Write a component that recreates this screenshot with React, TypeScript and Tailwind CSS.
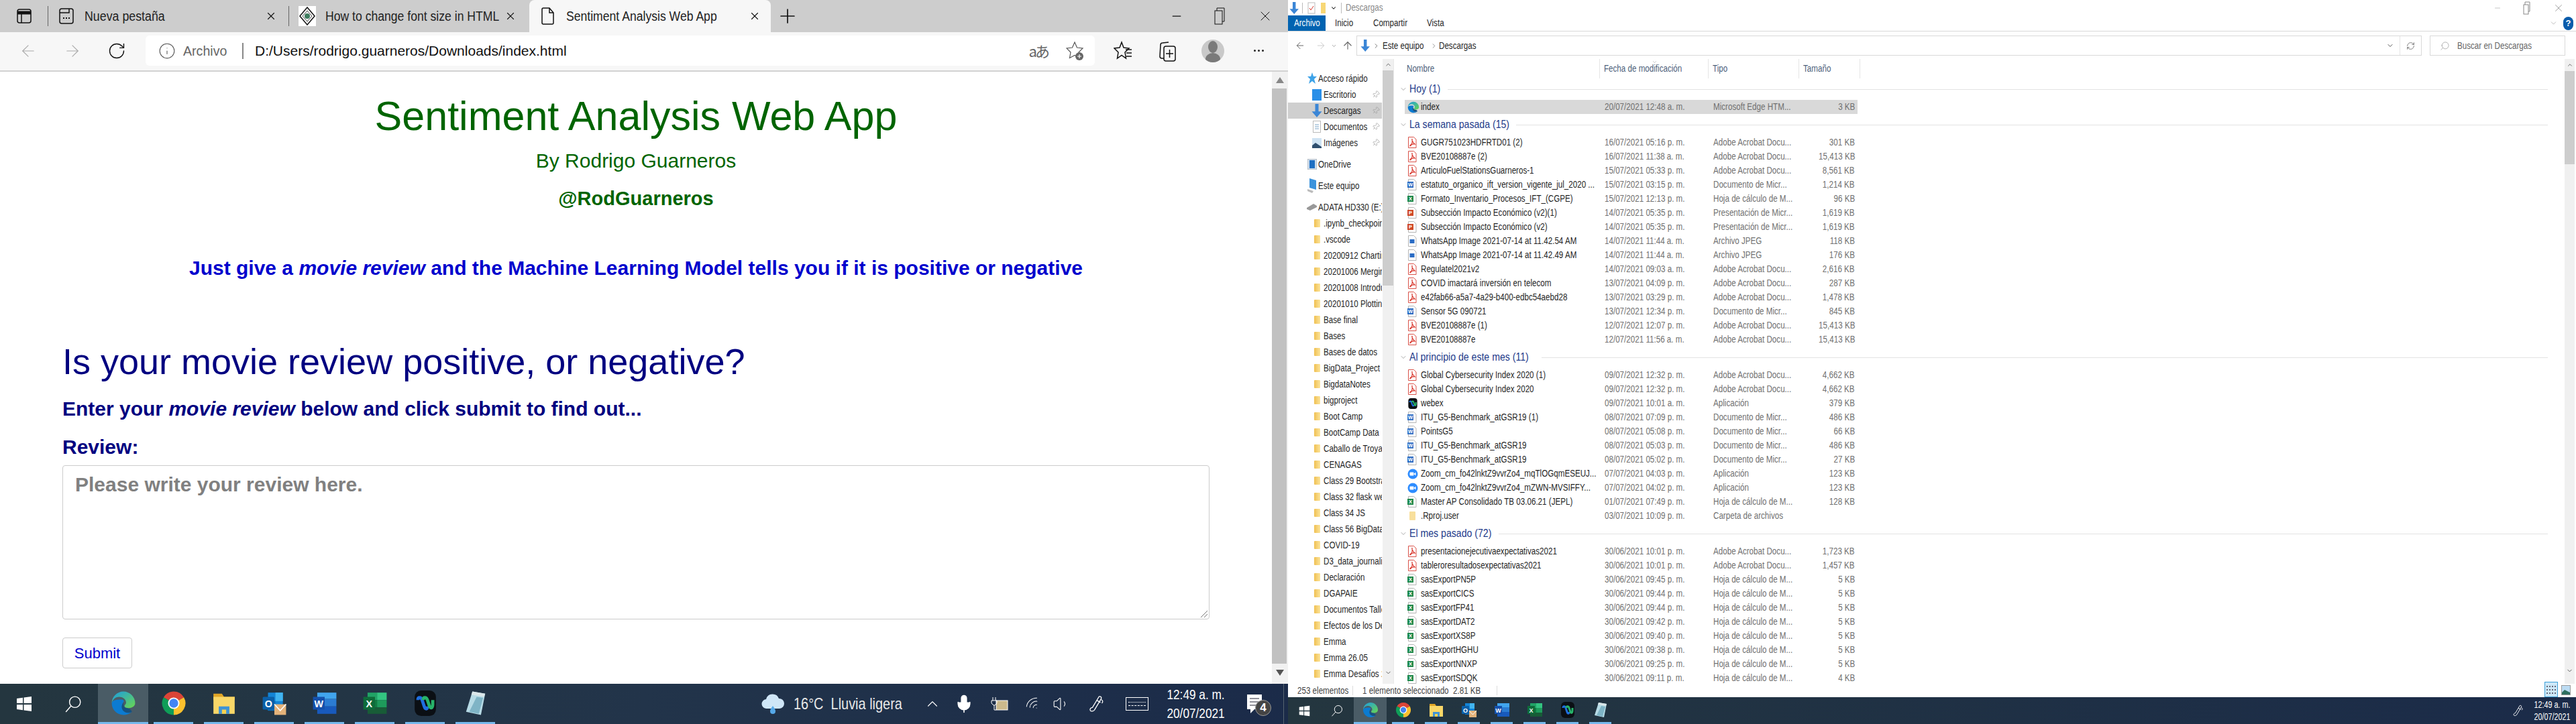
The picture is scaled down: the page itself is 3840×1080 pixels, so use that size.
import React from "react";
import { ArrowLeft, ArrowRight, RotateCw, Info, Plus, Minus, X, ChevronDown, ChevronUp, ChevronRight, Search, Pin, ArrowUp, Mic, Volume1, Wifi, RefreshCw } from "lucide-react";

type K = "pdf" | "word" | "wordp" | "xl" | "ppt" | "jpg" | "edge" | "webex" | "zoom" | "folder";
type Row = [K, string, string, string, string];

const S = ({ c = "", children }: { c?: string; children: React.ReactNode }) => (
  <span className={`inline-block whitespace-nowrap origin-left scale-x-[.83] ${c}`}>{children}</span>
);

const Edge = ({ s }: { s: number }) => (
  <svg width={s} height={s} viewBox="0 0 24 24" className="shrink-0">
    <defs>
      <linearGradient id="eg" x1="0" y1="0" x2="1" y2="1">
        <stop offset="0" stopColor="#1b9de2" />
        <stop offset="1" stopColor="#6ad64f" />
      </linearGradient>
    </defs>
    <path d="M12 1a11 11 0 0 1 11 11c0 3-3 4.5-6 4.5-2 0-4-.5-4-2 0-1 1.5-1.5 1.5-3C14.5 8 11 6 8 6 5 6 2 8 1 12 1 6 6 1 12 1z" fill="url(#eg)" />
    <path d="M1 12c0 6 5 11 11 11 3 0 6-1 8-3-2 1-5 1-7-.5-3-2-3-6-1-8.5 1-1.2 0-2.5-2-2.5C5 8.5 1.5 9 1 12z" fill="#0c7bd1" />
    <path d="M12 11.5c-2.500 3-2 6.500 1 8.500 2 1.300 5 1.300 7 0-.5-2-3-3.500-5-3.500-2 0-3-1-3-5z" fill="#17517f" />
  </svg>
);
const Chrome = ({ s }: { s: number }) => (
  <svg width={s} height={s} viewBox="0 0 24 24" className="shrink-0">
    <path d="M12 12L2.470 6.500A11 11 0 0 1 21.530 6.500Z" fill="#db4437" />
    <path d="M12 12L21.530 6.500A11 11 0 0 1 12 23Z" fill="#fbc02d" />
    <path d="M12 12L12 23A11 11 0 0 1 2.470 6.500Z" fill="#0f9d58" />
    <circle cx="12" cy="12" r="5.400" fill="#fff" />
    <circle cx="12" cy="12" r="4.200" fill="#4285f4" />
  </svg>
);
const FolderT = ({ s }: { s: number }) => (
  <svg width={s} height={s} viewBox="0 0 24 24" className="shrink-0">
    <path d="M2 3h8l2 3h10v3H2z" fill="#e0a526" />
    <rect x="2" y="6" width="20" height="16" fill="#f9d768" />
    <rect x="7" y="15" width="10" height="7" fill="#3f93d6" />
    <rect x="10" y="18" width="4" height="4" fill="#f7d24e" />
  </svg>
);
const Outlook = ({ s }: { s: number }) => (
  <svg width={s} height={s} viewBox="0 0 24 24" className="shrink-0">
    <rect x="6" y="2" width="14" height="17" fill="#1384d6" />
    <rect x="13" y="2" width="7" height="8" fill="#41b4f0" />
    <rect x="6" y="10" width="7" height="9" fill="#0b6cb8" />
    <rect x="1" y="6" width="11" height="12" rx="1" fill="#0a5fa8" />
    <text x="6.500" y="15.500" fontSize="9" fontWeight="700" fill="#fff" textAnchor="middle" fontFamily="Liberation Sans">O</text>
    <rect x="12" y="13" width="11" height="10" fill="#e3b27a" />
    <path d="M12 13l5.500 6 5.500-6" fill="none" stroke="#fff" strokeWidth="1" />
  </svg>
);
const Word = ({ s }: { s: number }) => (
  <svg width={s} height={s} viewBox="0 0 24 24" className="shrink-0">
    <rect x="5" y="2" width="18" height="6" fill="#41a5ee" />
    <rect x="5" y="8" width="18" height="7" fill="#2b7cd3" />
    <rect x="5" y="15" width="18" height="7" fill="#185abd" />
    <rect x="1" y="6" width="11" height="12" fill="#1550ab" />
    <text x="6.500" y="15.500" fontSize="9" fontWeight="700" fill="#fff" textAnchor="middle" fontFamily="Liberation Sans">W</text>
  </svg>
);
const Excel = ({ s }: { s: number }) => (
  <svg width={s} height={s} viewBox="0 0 24 24" className="shrink-0">
    <rect x="5" y="2" width="9" height="7" fill="#21a366" />
    <rect x="14" y="2" width="9" height="7" fill="#33c481" />
    <rect x="5" y="9" width="9" height="7" fill="#107c41" />
    <rect x="14" y="9" width="9" height="7" fill="#1e9b5b" />
    <rect x="5" y="16" width="18" height="6" fill="#185c37" />
    <rect x="1" y="6" width="11" height="12" fill="#0e6b3a" />
    <text x="6.500" y="15.500" fontSize="9" fontWeight="700" fill="#fff" textAnchor="middle" fontFamily="Liberation Sans">X</text>
  </svg>
);
const Webex = ({ s }: { s: number }) => (
  <svg width={s} height={s} viewBox="0 0 24 24" className="shrink-0">
    <rect x="2" y="0" width="20" height="24" rx="6" fill="#0b0f14" />
    <path d="M5 9c0-3 3-3 4 0l2 6c1 3 3 3 3 0" fill="none" stroke="#1f6fe0" strokeWidth="3" />
    <path d="M10 9c0-3 3-3 4 0l2 6c1 2 3 2 3-2V9" fill="none" stroke="#27b36a" strokeWidth="3" />
  </svg>
);
const Notepad = ({ s }: { s: number }) => (
  <svg width={s} height={s} viewBox="0 0 24 24" className="shrink-0">
    <path d="M9 1l12 2-4 20-14-3z" fill="#b7dbe6" />
    <path d="M9 1l12 2-1 3-12-2z" fill="#dbe7ea" />
    <path d="M13 6l6 1-4 15-9-2z" fill="#7fb4c6" />
  </svg>
);

const FileIcon = ({ k }: { k: K }) => {
  if (k === "edge") return <Edge s={18} />;
  if (k === "webex") return <Webex s={16} />;
  if (k === "zoom")
    return (
      <svg width="16" height="16" viewBox="0 0 16 16" className="shrink-0">
        <circle cx="8" cy="8" r="7.500" fill="#2d8cff" />
        <rect x="3.500" y="5.500" width="6" height="5" rx="1" fill="#fff" />
        <path d="M10 7.500l2.500-2v5l-2.500-2z" fill="#fff" />
      </svg>
    );
  if (k === "folder") return <span className="w-[9px] h-[13px] rounded-[1px] bg-[#f8df9c] shrink-0 ml-[3px]" />;
  const color = { pdf: "#d9382e", word: "#2b6cc4", wordp: "#3a76c9", xl: "#1f8a4c", ppt: "#d04a28", jpg: "#2b6cc4" }[k];
  const label = { pdf: "", word: "W", wordp: "W", xl: "X", ppt: "P", jpg: "" }[k];
  return (
    <svg width="14" height="17" viewBox="0 0 14 17" className="shrink-0">
      <path d="M1.500.5h8l3.500 3.500v12.500h-11.500z" fill="#fff" stroke={k === "pdf" ? "#d9534a" : "#b5b5b5"} />
      {k === "pdf" ? (
        <path d="M7 3c-1 3 3 7 4 8-2-.5-6 0-7 2-1 1.500 1 1 2-1 1-2 1.500-6 1-9z" fill="none" stroke="#d9382e" strokeWidth="1.200" />
      ) : k === "jpg" ? (
        <rect x="3.500" y="6" width="7" height="6" fill={color} />
      ) : (
        <>
          <rect x="0" y="4" width="9" height="9" fill={color} />
          <text x="4.500" y="11.200" fontSize="7.500" fontWeight="700" fill="#fff" textAnchor="middle" fontFamily="Liberation Sans">{label}</text>
        </>
      )}
    </svg>
  );
};

const g1: Row[] = [
  ["pdf", "GUGR751023HDFRTD01 (2)", "16/07/2021 05:16 p. m.", "Adobe Acrobat Docu...", "301 KB"],
  ["pdf", "BVE20108887e (2)", "16/07/2021 11:38 a. m.", "Adobe Acrobat Docu...", "15,413 KB"],
  ["pdf", "ArticuloFuelStationsGuarneros-1", "15/07/2021 05:33 p. m.", "Adobe Acrobat Docu...", "8,561 KB"],
  ["word", "estatuto_organico_ift_version_vigente_jul_2020 ...", "15/07/2021 03:15 p. m.", "Documento de Micr...", "1,214 KB"],
  ["xl", "Formato_Inventario_Procesos_IFT_(CGPE)", "15/07/2021 12:13 p. m.", "Hoja de cálculo de M...", "96 KB"],
  ["ppt", "Subsección Impacto Económico (v2)(1)", "14/07/2021 05:35 p. m.", "Presentación de Micr...", "1,619 KB"],
  ["ppt", "Subsección Impacto Económico (v2)", "14/07/2021 05:35 p. m.", "Presentación de Micr...", "1,619 KB"],
  ["jpg", "WhatsApp Image 2021-07-14 at 11.42.54 AM", "14/07/2021 11:44 a. m.", "Archivo JPEG", "118 KB"],
  ["jpg", "WhatsApp Image 2021-07-14 at 11.42.49 AM", "14/07/2021 11:44 a. m.", "Archivo JPEG", "176 KB"],
  ["pdf", "Regulatel2021v2", "14/07/2021 09:03 a. m.", "Adobe Acrobat Docu...", "2,616 KB"],
  ["pdf", "COVID imactará inversión en telecom", "13/07/2021 04:09 p. m.", "Adobe Acrobat Docu...", "287 KB"],
  ["pdf", "e42fab66-a5a7-4a29-b400-edbc54aebd28", "13/07/2021 03:29 p. m.", "Adobe Acrobat Docu...", "1,478 KB"],
  ["word", "Sensor 5G 090721", "13/07/2021 12:34 p. m.", "Documento de Micr...", "845 KB"],
  ["pdf", "BVE20108887e (1)", "12/07/2021 12:07 p. m.", "Adobe Acrobat Docu...", "15,413 KB"],
  ["pdf", "BVE20108887e", "12/07/2021 11:56 a. m.", "Adobe Acrobat Docu...", "15,413 KB"],
];
const g2: Row[] = [
  ["pdf", "Global Cybersecurity Index 2020 (1)", "09/07/2021 12:32 p. m.", "Adobe Acrobat Docu...", "4,662 KB"],
  ["pdf", "Global Cybersecurity Index 2020", "09/07/2021 12:32 p. m.", "Adobe Acrobat Docu...", "4,662 KB"],
  ["webex", "webex", "09/07/2021 10:01 a. m.", "Aplicación", "379 KB"],
  ["wordp", "ITU_G5-Benchmark_atGSR19 (1)", "08/07/2021 07:09 p. m.", "Documento de Micr...", "486 KB"],
  ["wordp", "PointsG5", "08/07/2021 05:08 p. m.", "Documento de Micr...", "66 KB"],
  ["wordp", "ITU_G5-Benchmark_atGSR19", "08/07/2021 05:03 p. m.", "Documento de Micr...", "486 KB"],
  ["word", "ITU_G5-Benchmark_atGSR19", "08/07/2021 05:02 p. m.", "Documento de Micr...", "27 KB"],
  ["zoom", "Zoom_cm_fo42lnktZ9vvrZo4_mqTlOGqmESEUJ...", "07/07/2021 04:03 p. m.", "Aplicación", "123 KB"],
  ["zoom", "Zoom_cm_fo42lnktZ9vvrZo4_mZWN-MVSIFFY...", "07/07/2021 04:02 p. m.", "Aplicación", "123 KB"],
  ["xl", "Master AP Consolidado TB 03.06.21 (JEPL)", "01/07/2021 07:49 p. m.", "Hoja de cálculo de M...", "128 KB"],
  ["folder", ".Rproj.user", "03/07/2021 10:09 p. m.", "Carpeta de archivos", ""],
];
const x = "Hoja de cálculo de M...";
const g3: Row[] = [
  ["pdf", "presentacionejecutivaexpectativas2021", "30/06/2021 10:01 p. m.", "Adobe Acrobat Docu...", "1,723 KB"],
  ["pdf", "tableroresultadosexpectativas2021", "30/06/2021 10:01 p. m.", "Adobe Acrobat Docu...", "1,457 KB"],
  ["xl", "sasExportPN5P", "30/06/2021 09:45 p. m.", x, "5 KB"],
  ["xl", "sasExportCICS", "30/06/2021 09:44 p. m.", x, "5 KB"],
  ["xl", "sasExportFP41", "30/06/2021 09:44 p. m.", x, "5 KB"],
  ["xl", "sasExportDAT2", "30/06/2021 09:42 p. m.", x, "5 KB"],
  ["xl", "sasExportXS8P", "30/06/2021 09:40 p. m.", x, "5 KB"],
  ["xl", "sasExportHGHU", "30/06/2021 09:38 p. m.", x, "5 KB"],
  ["xl", "sasExportNNXP", "30/06/2021 09:25 p. m.", x, "5 KB"],
  ["xl", "sasExportSDQK", "30/06/2021 09:11 p. m.", x, "4 KB"],
];

const navFolders = [".ipynb_checkpoints", ".vscode", "20200912 Charting", "20201006 Merging", "20201008 Introduction", "20201010 Plotting", "Base final", "Bases", "Bases de datos", "BigData_Project", "BigdataNotes", "bigproject", "Boot Camp", "BootCamp Data", "Caballo de Troya", "CENAGAS", "Class 29 Bootstrap", "Class 32 flask web", "Class 34 JS", "Class 56 BigData", "COVID-19", "D3_data_journalism", "Declaración", "DGAPAIE", "Documentos Taller", "Efectos de los Desastres", "Emma", "Emma 26.05", "Emma Desafíos 2"];

const FileRow = ({ r, sel }: { r: Row; sel?: boolean }) => (
  <div className={`grid grid-cols-[298px_162px_133px_82px] items-center h-[21px] w-[675px] ml-4 text-[14px] text-[#707070] ${sel ? "bg-[#d9d9d9]" : ""}`}>
    <div className="flex items-center overflow-hidden">
      <span className="w-6 flex pl-1 shrink-0"><FileIcon k={r[0]} /></span>
      <S c="text-[#1f1f1f]">{r[1]}</S>
    </div>
    <S>{r[2]}</S>
    <S>{r[3]}</S>
    <div className="flex justify-end pr-1"><span className="inline-block whitespace-nowrap origin-right scale-x-[.83]">{r[4]}</span></div>
  </div>
);

const Group = ({ t, w }: { t: string; w: string }) => (
  <div className="flex items-center h-8 pl-[8px] pr-[25px]">
    <ChevronDown size={12} strokeWidth={1} className="text-[#555] shrink-0" />
    <div className={`ml-[3px] shrink-0 ${w}`}><S c="text-[17px] text-[#1d3a8a]">{t}</S></div>
    <div className="flex-1 h-px bg-[#e3e3e3]" />
  </div>
);

const NavItem = ({ icon, text, pin, sel, l1 }: { icon: React.ReactNode; text: string; pin?: boolean; sel?: boolean; l1?: boolean }) => (
  <div className={`flex items-center h-6 shrink-0 relative overflow-hidden text-[14px] text-[#1f1f1f] ${sel ? "bg-[#cfcfcf]" : ""} ${l1 ? "pl-[26px]" : "pl-[33px]"}`}>
    <span className={`flex justify-center shrink-0 ${l1 ? "w-[19px]" : "w-5"}`}>{icon}</span>
    <S>{text}</S>
    {pin && <Pin size={12} strokeWidth={1.500} className="absolute right-[3px] top-[6px] text-[#a0a0a0] rotate-45 bg-transparent" />}
  </div>
);

const NavFolder = () => <span className="w-[9px] h-[12px] rounded-[1px] bg-linear-to-r from-[#f0c050] to-[#fbe49a]" />;
const DownArrow = ({ s = 16 }: { s?: number }) => (
  <svg width={s * 0.8} height={s} viewBox="0 0 12 16"><path d="M4 0h4v9h4l-6 7-6-7h4z" fill="#3b86d6" /></svg>
);

const Slot = ({ w, bar, hi, children }: { w: string; bar?: boolean; hi?: boolean; children: React.ReactNode }) => (
  <div className={`flex flex-col h-full shrink-0 ${w} ${hi ? "bg-[#4a5c66]" : ""}`}>
    <div className="flex-1 flex items-center justify-center">{children}</div>
    <div className={`h-[3px] ${bar ? "bg-[#76b9ed]" : ""} ${hi ? "" : "mx-2"}`} />
  </div>
);

const Win = ({ s }: { s: number }) => (
  <svg width={s} height={s} viewBox="0 0 24 24" className="shrink-0">
    <path d="M1 4l9-1.300V11H1zM11.500 2.500L23 1v10H11.500zM1 13h9v8.300L1 20zM11.500 13H23v10l-11.500-1.600z" fill="#fff" />
  </svg>
);
const Mag = ({ s }: { s: number }) => (
  <svg width={s} height={s} viewBox="0 0 24 24" fill="none" stroke="#fff" strokeWidth="1.300" className="shrink-0">
    <circle cx="14.500" cy="9.500" r="7.500" /><path d="M9 15l-7 8" />
  </svg>
);

const Pen = ({ s }: { s: number }) => (
  <svg width={s} height={s} viewBox="0 0 24 24" fill="none" stroke="#fff" strokeWidth="1.200" className="shrink-0">
    <path d="M15 2c2-1 4 1 3 3L9 20c-1 2-5 3-6 1s1-4 3-4l9-15z" /><path d="M12 7l5 3" /><path d="M18 6c2 1 3 3 1 5" />
  </svg>
);

const apps = (s: number) => [<Chrome s={s} />, <FolderT s={s} />, <Outlook s={s} />, <Word s={s} />, <Excel s={s} />, <Webex s={s} />, <Notepad s={s} />];

export default function App() {
  return (
    <div className="flex w-[3840px] h-[1080px] overflow-hidden bg-white font-['Liberation_Sans',Arial,sans-serif]">
      {/* LEFT MONITOR */}
      <div className="flex flex-col w-[1920px] shrink-0">
        {/* tab strip */}
        <div className="flex h-12 bg-[#cdcdcd] shrink-0 items-center text-[20px] text-[#222]">
          <div className="w-[71px] flex justify-center">
            <svg width="24" height="24" viewBox="0 0 24 24" fill="none" stroke="#111" strokeWidth="1.500">
              <rect x="2" y="2" width="20" height="20" rx="3" /><path d="M2 7h20" strokeWidth="5" /><path d="M8 7v15" />
            </svg>
          </div>
          <div className="w-px h-[30px] bg-[#666]" />
          <div className="flex items-center w-[358px] pl-4 shrink-0">
            <svg width="22" height="24" viewBox="0 0 22 24" fill="none" stroke="#111" strokeWidth="1.500">
              <rect x="1" y="1" width="20" height="22" rx="3" /><path d="M1 7h14V1" /><path d="M6 15h2M10 15h2M14 15h2" strokeWidth="2" />
            </svg>
            <span className="ml-4 w-[269px]"><S c="scale-x-[.89]">Nueva pestaña</S></span>
            <X size={18} strokeWidth={1.500} className="text-[#111]" />
          </div>
          <div className="w-px h-[30px] bg-[#666]" />
          <div className="flex items-center w-[358px] pl-[14px] shrink-0">
            <span className="w-[26px] h-[30px] bg-white flex items-center justify-center">
              <svg width="24" height="28" viewBox="0 0 24 28"><path d="M12 1l11 13-11 13L1 14z" fill="none" stroke="#111" strokeWidth="1.500" /><path d="M12 6l7 8-7 8-7-8z" fill="none" stroke="#444" /><circle cx="12" cy="14" r="4" fill="#3f7d5f" /></svg>
            </span>
            <span className="ml-[14px] w-[259px] overflow-hidden"><S c="scale-x-[.88]">How to change font size in HTML</S></span>
            <X size={18} strokeWidth={1.500} className="ml-[8px] text-[#111]" />
          </div>
          <div className="flex items-center w-[360px] h-full bg-[#f7f7f7] rounded-t-lg pl-[18px] shrink-0">
            <svg width="20" height="26" viewBox="0 0 20 26" fill="none" stroke="#111" strokeWidth="1.500">
              <path d="M3 1h9l6 7v15a2 2 0 0 1-2 2H3a2 2 0 0 1-2-2V3a2 2 0 0 1 2-2z" /><path d="M12 1v7h6" />
            </svg>
            <span className="ml-[17px] w-[272px]"><S c="scale-x-[.88]">Sentiment Analysis Web App</S></span>
            <X size={18} strokeWidth={1.500} className="text-[#111]" />
          </div>
          <Plus size={34} strokeWidth={1.200} className="ml-[8px] text-[#111]" />
          <div className="ml-auto flex items-center">
            <Minus size={20} strokeWidth={1.500} className="text-[#111] mr-[46px]" />
            <svg width="16" height="28" viewBox="0 0 16 28" fill="none" stroke="#111" className="mr-[48px]"><rect x="1" y="6" width="11" height="20" /><path d="M4 6V2h11v20h-3" /></svg>
            <X size={24} strokeWidth={1} className="text-[#111] mr-[22px]" />
          </div>
        </div>
        {/* toolbar */}
        <div className="flex items-center h-[59px] bg-[#f7f7f7] border-b-2 border-[#d2d2d2] shrink-0 pb-[2px]">
          <ArrowLeft size={28} strokeWidth={1} className="ml-7 text-[#aaa]" />
          <ArrowRight size={28} strokeWidth={1} className="ml-[38px] text-[#aaa]" />
          <RotateCw size={28} strokeWidth={1.200} className="ml-[38px] text-[#111]" />
          <div className="flex items-center ml-[29px] w-[1415px] h-[45px] bg-white rounded-md text-[20px]">
            <Info size={26} strokeWidth={1} className="ml-[19px] text-[#555]" />
            <span className="ml-[11px] w-[88px]"><S c="text-[#666] scale-x-[.98]">Archivo</S></span>
            <span className="w-[2px] h-[24px] bg-[#888]" />
            <span className="ml-[17px] w-[600px] text-[#111] text-[21px] whitespace-nowrap">D:/Users/rodrigo.guarneros/Downloads/index.html</span>
            <span className="ml-auto text-[#666] text-[22px] font-['Noto_Sans_CJK_JP',sans-serif] mr-[27px] tracking-[-3px]">aあ</span>
            <svg width="28" height="30" viewBox="0 0 28 30" fill="none" stroke="#555" strokeWidth="1.200" className="mr-[15px]">
              <path d="M13 2l3.500 8 8.500 1-6 6 1.500 8.500-7.500-4-7.500 4 1.500-8.500-6-6 8.500-1z" />
              <circle cx="20" cy="23" r="6" fill="#666" stroke="none" /><path d="M20 20v6M17 23h6" stroke="#fff" />
            </svg>
          </div>
          <svg width="28" height="30" viewBox="0 0 28 30" fill="none" stroke="#111" strokeWidth="1.500" className="ml-[28px]">
            <path d="M12 2l3 8 8 1-6 6 1.500 9-6.500-4.500-6.500 4.500 1.500-9-6-6 8-1z" /><path d="M18 13h9M19 18h8M19 23h8" />
          </svg>
          <svg width="26" height="32" viewBox="0 0 26 32" fill="none" stroke="#111" strokeWidth="1.500" className="ml-[39px]">
            <path d="M8 27l-3 0a3 3 0 0 1-3-3l1-17a3 3 0 0 1 3-3l9-1" /><rect x="8" y="9" width="17" height="22" rx="3" /><path d="M16.500 14v12M11 20h11" />
          </svg>
          <div className="ml-[38px] w-[34px] h-[34px] rounded-full bg-[#c9c9c9] overflow-hidden flex items-center justify-center">
            <svg width="30" height="34" viewBox="0 0 30 34"><ellipse cx="15" cy="11" rx="7" ry="9" fill="#7a7a7a" /><ellipse cx="15" cy="29" rx="11" ry="9" fill="#7a7a7a" /></svg>
          </div>
          <div className="ml-[44px] flex gap-[3px]">
            <span className="w-[3px] h-[3px] bg-[#222] rounded-full" /><span className="w-[3px] h-[3px] bg-[#222] rounded-full" /><span className="w-[3px] h-[3px] bg-[#222] rounded-full" />
          </div>
        </div>
        {/* page */}
        <div className="flex flex-1 min-h-0 bg-white">
          <div className="w-[1896px] shrink-0 overflow-hidden">
            <h1 className="mt-[32px] text-center text-[61px] leading-[69px] text-[#006400]">Sentiment Analysis Web App</h1>
            <h2 className="mt-[15px] text-center text-[30px] leading-[34px] text-[#006400]">By Rodrigo Guarneros</h2>
            <h3 className="mt-[23px] text-center text-[29px] leading-[32px] font-bold text-[#006400]">@RodGuarneros</h3>
            <p className="mt-[71px] text-center text-[30px] leading-[34px] font-bold text-[#0000cd]">Just give a <i>movie review</i> and the Machine Learning Model tells you if it is positive or negative</p>
            <div className="pl-[93px] w-[1803px]">
              <h2 className="mt-[92px] text-[54px] leading-[61px] text-[#000080]">Is your movie review positive, or negative?</h2>
              <p className="mt-[24px] text-[30px] leading-[32px] font-bold text-[#000080]">Enter your <i>movie review</i> below and click submit to find out...</p>
              <p className="mt-[25px] text-[30px] leading-[32px] font-bold text-[#000080]">Review:</p>
              <div className="relative mt-[11px] h-[230px] border border-[#ccc] rounded bg-white pl-[18px] pt-[11px]">
                <span className="text-[30px] leading-[34px] font-bold text-[#808080]">Please write your review here.</span>
                <svg width="12" height="12" viewBox="0 0 12 12" className="absolute right-[1px] bottom-[1px]" stroke="#777" fill="none"><path d="M11 1L1 11M11 6l-5 5" /></svg>
              </div>
              <button className="mt-[27px] w-[104px] h-[46px] border border-[#ccc] rounded text-[22px] text-[#0000cd] bg-white">Submit</button>
            </div>
          </div>
          <div className="w-[24px] shrink-0 flex flex-col bg-[#f1f1f1]">
            <div className="h-[25px] flex items-center justify-center"><span className="w-0 h-0 border-x-[6px] border-x-transparent border-b-[9px] border-b-[#888]" /></div>
            <div className="h-[858px] w-[22px] bg-[#c1c1c1]" />
            <div className="h-[26px] flex items-center justify-center"><span className="w-0 h-0 border-x-[6px] border-x-transparent border-t-[9px] border-t-[#555]" /></div>
          </div>
        </div>
        {/* taskbar left */}
        <div className="flex items-center h-[60px] shrink-0 bg-linear-to-r from-[#24363f] via-[#22344a] to-[#1b2b49] text-white">
          <div className="w-[72px] flex justify-center shrink-0"><Win s={24} /></div>
          <div className="w-[74px] flex justify-center shrink-0"><Mag s={26} /></div>
          <Slot w="w-[75px]" bar hi><Edge s={38} /></Slot>
          {apps(38).map((a, i) => <Slot key={i} w="w-[75px]" bar>{a}</Slot>)}
          <div className="ml-[389px] flex items-center h-full shrink-0">
            <svg width="35" height="34" viewBox="0 0 35 34" className="shrink-0">
              <path d="M8 24a7 7 0 0 1-1-14 10 10 0 0 1 19-1 7.500 7.500 0 0 1 1 15z" fill="#cfe6f7" />
              <path d="M17 20c3 4 4 6 4 8a4 4 0 0 1-8 0c0-2 1-4 4-8z" fill="#55a8e8" />
            </svg>
            <span className="ml-[13px] w-[190px] shrink-0"><S c="text-[24px] text-[#e8e8e8]">16°C&nbsp;&nbsp;Lluvia ligera</S></span>
            <span className="w-[34px] flex justify-center"><ChevronUp size={26} strokeWidth={1} /></span>
            <span className="w-[60px] flex justify-center"><Mic size={30} strokeWidth={1.300} fill="#fff" /></span>
            <span className="w-[46px] flex justify-center">
              <svg width="26" height="22" viewBox="0 0 26 22" fill="none" stroke="#fff"><rect x="8" y="6" width="17" height="14" fill="#cbb98c" /><path d="M3 1v5M7 1v5M1 6h8v4l-3 3H4l-3-3zM5 13v7h3" /></svg>
            </span>
            <span className="w-[54px] flex justify-center"><Wifi size={24} strokeWidth={1} className="rotate-[-40deg]" /></span>
            <span className="w-[30px] flex justify-center"><Volume1 size={26} strokeWidth={1} /></span>
            <span className="w-[76px] flex justify-center"><Pen s={26} /></span>
            <span className="w-[44px] flex justify-center">
              <span className="w-[34px] h-[20px] border border-white flex flex-col justify-center gap-[4px] px-[3px]">
                <span className="border-t border-dotted border-white" /><span className="border-t border-dashed border-white" />
              </span>
            </span>
            <div className="w-[132px] flex flex-col items-center text-[21px] leading-[28px] shrink-0">
              <span className="scale-x-[.82] whitespace-nowrap">12:49 a. m.</span>
              <span className="scale-x-[.82] whitespace-nowrap">20/07/2021</span>
            </div>
            <div className="relative w-[42px] flex justify-center">
              <svg width="24" height="30" viewBox="0 0 24 30"><path d="M1 1h22v22H12l-6 6v-6H1z" fill="#fff" /><path d="M5 7h14M5 12h14M5 17h10" stroke="#223" /></svg>
              <span className="absolute left-[22px] top-[9px] w-[24px] h-[24px] rounded-full bg-[#444] border border-[#999] flex items-center justify-center text-[17px] font-bold">4</span>
            </div>
            <div className="ml-[22px] w-px h-full bg-[#55646f]" />
          </div>
        </div>
      </div>

      {/* RIGHT MONITOR */}
      <div className="flex flex-col w-[1920px] shrink-0 text-[14px] text-[#1f1f1f]">
        {/* title */}
        <div className="flex items-center h-[23px] shrink-0 pl-[2px]">
          <DownArrow s={18} />
          <span className="ml-[5px] w-px h-[16px] bg-[#bbb]" />
          <svg width="12" height="18" viewBox="0 0 12 18" fill="none" className="ml-[7px]"><rect x="1" y="1" width="10" height="16" stroke="#bbb" /><path d="M3 9l2 3 4-6" stroke="#d9382e" /></svg>
          <span className="ml-[8px] w-[7px] h-[16px] bg-[#f8d775]" />
          <ChevronDown size={10} strokeWidth={2.500} className="ml-[7px] text-[#111]" />
          <span className="ml-[6px] w-px h-[16px] bg-[#bbb]" />
          <span className="ml-[6px]"><S c="text-[#888] leading-none">Descargas</S></span>
          <div className="ml-auto flex items-center text-[#888]">
            <Minus size={12} strokeWidth={1} className="mr-[32px]" />
            <svg width="11" height="20" viewBox="0 0 11 20" fill="none" stroke="#888" className="mr-[33px]"><rect x="1" y="5" width="7" height="14" /><path d="M3 5V1h7v14H8" /></svg>
            <X size={18} strokeWidth={1} className="mr-[17px]" />
          </div>
        </div>
        {/* ribbon */}
        <div className="flex items-center h-6 shrink-0 border-b border-[#d9d9d9] relative">
          <div className="w-14 h-[23px] bg-[#0063b1] text-white flex items-center pl-[9px]"><S>Archivo</S></div>
          <span className="ml-[14px] w-[57px]"><S>Inicio</S></span>
          <span className="w-[80px]"><S>Compartir</S></span>
          <span><S>Vista</S></span>
          <div className="ml-auto flex items-center">
            <ChevronDown size={13} strokeWidth={1} className="text-[#888] mr-[8px]" />
            <span className="w-[15px] h-[20px] rounded-full bg-[#0b5cab] text-white text-[13px] font-bold flex items-center justify-center mr-[4px]">?</span>
          </div>
        </div>
        {/* address */}
        <div className="flex items-center h-[41px] shrink-0 pt-[1px]">
          <ArrowLeft size={16} strokeWidth={1.500} className="ml-[10px] text-[#666]" />
          <ArrowRight size={16} strokeWidth={1.500} className="ml-[15px] text-[#ccc]" />
          <ChevronDown size={9} strokeWidth={2} className="ml-[7px] text-[#888]" />
          <ArrowUp size={18} strokeWidth={1.500} className="ml-[7px] text-[#666]" />
          <div className="flex items-center ml-[4px] w-[1588px] h-[30px] border border-[#d9d9d9] shrink-0">
            <span className="ml-[5px] flex"><DownArrow s={18} /></span>
            <ChevronRight size={11} className="ml-[4px] text-[#666]" />
            <span className="ml-[4px] w-[71px]"><S>Este equipo</S></span>
            <ChevronRight size={11} className="text-[#888]" />
            <span className="ml-[2px]"><S>Descargas</S></span>
            <ChevronDown size={12} strokeWidth={2} className="ml-auto mr-[8px] text-[#555]" />
            <span className="w-px h-full bg-[#e5e5e5]" />
            <RefreshCw size={13} strokeWidth={1.500} className="mx-[9px] text-[#666]" />
          </div>
          <div className="flex items-center ml-[12px] w-[202px] h-[30px] border border-[#d9d9d9] shrink-0 text-[#666]">
            <Search size={15} strokeWidth={1} className="ml-[14px] -scale-x-100 text-[#888]" />
            <span className="ml-[11px]"><S>Buscar en Descargas</S></span>
          </div>
        </div>
        {/* body */}
        <div className="flex flex-1 min-h-0">
          <div className="flex w-[158px] shrink-0 border-r border-[#e8e8e8]">
            <div className="w-[140px] shrink-0 flex flex-col pt-[17px] overflow-hidden">
              <NavItem l1 text="Acceso rápido" icon={<svg width="14" height="18" viewBox="0 0 14 18"><path d="M7 0l2 6h5l-4 4 2 7-5-4-5 4 2-7-4-4h5z" fill="#3ea3e8" /></svg>} />
              <NavItem pin text="Escritorio" icon={<span className="w-[14px] h-[17px] bg-[#2a8fe8]" />} />
              <NavItem pin sel text="Descargas" icon={<DownArrow s={20} />} />
              <NavItem pin text="Documentos" icon={<svg width="12" height="18" viewBox="0 0 12 18" fill="none"><rect x=".5" y=".5" width="11" height="17" fill="#fff" stroke="#bbb" /><path d="M3 6h6M3 9h6M3 12h6" stroke="#7aa6c9" /></svg>} />
              <NavItem pin text="Imágenes" icon={<svg width="14" height="15" viewBox="0 0 14 15"><rect width="14" height="15" fill="#cfe3f3" /><path d="M0 11l5-4 9 6v2H0z" fill="#2f4f6f" /></svg>} />
              <div className="h-2 shrink-0" />
              <NavItem l1 text="OneDrive" icon={<svg width="14" height="16" viewBox="0 0 14 16"><rect width="14" height="16" fill="#cde" stroke="#aaa" /><rect x="3" y="2" width="8" height="12" fill="#1e6fc2" /></svg>} />
              <div className="h-2 shrink-0" />
              <NavItem l1 text="Este equipo" icon={<svg width="14" height="22" viewBox="0 0 14 22"><path d="M3 0l10 3v14L3 14z" fill="#3c93dc" /><path d="M0 16l9 3-2 3-7-3z" fill="#bbb" /></svg>} />
              <div className="h-2 shrink-0" />
              <NavItem l1 text="ADATA HD330 (E:)" icon={<svg width="15" height="10" viewBox="0 0 15 10"><path d="M0 6l10-6 5 3v2L5 10l-5-2z" fill="#999" /></svg>} />
              {navFolders.map((f) => <NavItem key={f} text={f} icon={<NavFolder />} />)}
            </div>
            <div className="w-[16px] ml-px shrink-0 flex flex-col bg-[#f0f0f0]">
              <div className="h-[17px] flex justify-center items-center"><ChevronUp size={11} strokeWidth={2} className="text-[#555]" /></div>
              <div className="h-[321px] bg-[#cdcdcd]" />
              <div className="mt-auto h-[24px] flex justify-center items-start pt-[2px]"><ChevronDown size={11} strokeWidth={2} className="text-[#555]" /></div>
            </div>
          </div>
          <div className="flex-1 min-w-0 overflow-hidden relative">
            <div className="grid grid-cols-[291px_162px_135px_91px] h-[29px] ml-4 w-[679px] text-[#4c607a]">
              <div className="border-r border-[#e5e5e5] pl-[3px] flex items-center"><S>Nombre</S></div>
              <div className="border-r border-[#e5e5e5] pl-[6px] flex items-center"><S>Fecha de modificación</S></div>
              <div className="border-r border-[#e5e5e5] pl-[6px] flex items-center"><S>Tipo</S></div>
              <div className="border-r border-[#e5e5e5] pl-[6px] flex items-center"><S>Tamaño</S></div>
            </div>
            <ChevronDown size={9} strokeWidth={1} className="absolute left-[384px] top-[0px] text-[#777]" />
            <Group t="Hoy (1)" w="w-[57px]" />
            <FileRow sel r={["edge", "index", "20/07/2021 12:48 a. m.", "Microsoft Edge HTM...", "3 KB"]} />
            <Group t="La semana pasada (15)" w="w-[159px]" />
            {g1.map((r, i) => <FileRow key={i} r={r} />)}
            <Group t="Al principio de este mes (11)" w="w-[197px]" />
            {g2.map((r, i) => <FileRow key={i} r={r} />)}
            <Group t="El mes pasado (72)" w="w-[133px]" />
            {g3.map((r, i) => <FileRow key={i} r={r} />)}
          </div>
          <div className="w-[15px] mr-[2px] shrink-0 flex flex-col bg-[#f0f0f0]">
            <div className="h-[18px] flex justify-center items-center"><ChevronUp size={10} strokeWidth={2} className="text-[#555]" /></div>
            <div className="h-[139px] bg-[#cdcdcd]" />
            <div className="mt-auto h-[28px] flex justify-center items-start pt-[3px]"><ChevronDown size={11} strokeWidth={2} className="text-[#555]" /></div>
          </div>
        </div>
        {/* status */}
        <div className="flex items-center h-5 shrink-0 relative text-[#444]">
          <span className="ml-[14px] w-[82px]"><S>253 elementos</S></span>
          <span className="w-px h-[14px] bg-[#ddd]" />
          <span className="ml-[14px] w-[200px]"><S>1 elemento seleccionado&nbsp;&nbsp;2.81 KB</S></span>
          <span className="w-px h-[14px] bg-[#ddd]" />
          <div className="absolute right-[27px] -top-[3px] w-5 h-[23px] bg-[#cde8f8] border border-[#3ea0d8] flex flex-col justify-center gap-[3px] px-[2px]">
            <span className="border-t-2 border-dotted border-[#667]" /><span className="border-t-2 border-dotted border-[#667]" /><span className="border-t-2 border-dotted border-[#667]" />
          </div>
          <svg width="14" height="15" viewBox="0 0 14 15" className="absolute right-[8px] top-[2px]"><rect x=".5" y=".5" width="13" height="14" fill="#bcdcf3" stroke="#999" /><path d="M1 11l4-4 8 4v3H1z" fill="#2f6f5f" /></svg>
        </div>
        {/* taskbar right */}
        <div className="flex items-center h-10 shrink-0 bg-linear-to-r from-[#24363f] to-[#1b2b49] text-white">
          <div className="w-12 flex justify-center shrink-0"><Win s={17} /></div>
          <div className="w-[50px] flex justify-center shrink-0"><Mag s={18} /></div>
          <Slot w="w-[49px]" bar hi><Edge s={24} /></Slot>
          {apps(24).map((a, i) => <Slot key={i} w="w-[49px]" bar>{a}</Slot>)}
          <div className="ml-auto flex items-center pr-[7px]">
            <Pen s={18} />
            <div className="ml-[14px] w-[56px] flex flex-col items-center text-[15px] leading-[18px]">
              <span className="scale-x-[.72] whitespace-nowrap">12:49 a. m.</span>
              <span className="scale-x-[.72] whitespace-nowrap">20/07/2021</span>
            </div>
          </div>
        </div>
      </div>
    </div>
  );
}
